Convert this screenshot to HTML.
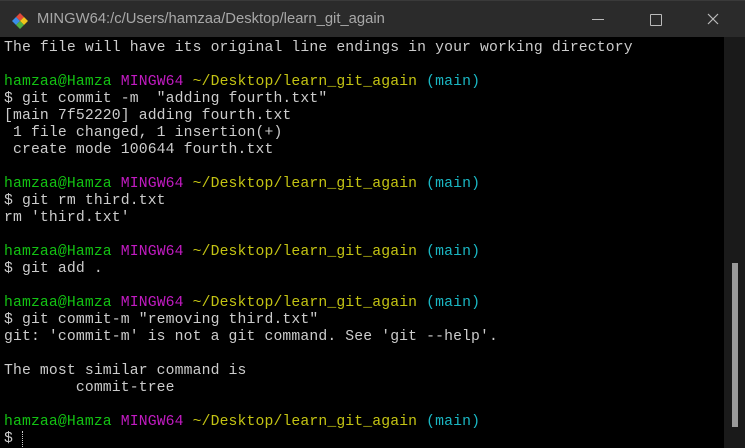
<!DOCTYPE html>
<html><head><meta charset="utf-8"><style>
html,body{margin:0;padding:0;background:#000;width:745px;height:448px;overflow:hidden}
.title{position:absolute;left:0;top:0;width:745px;height:37px;background:#2b2b2b;border-top:1px solid #3a3a3a;box-sizing:border-box}
.title .t{position:absolute;left:37px;top:10px;font:14.8px "Liberation Sans",sans-serif;color:#a8a8a8}
.term{position:absolute;left:4px;top:40px;font:14.75px/17px "Liberation Mono",monospace;letter-spacing:0.13px;color:#cccccc;white-space:pre}
.g{color:#13c313}.m{color:#c21bc2}.y{color:#c3c313}.c{color:#1ab7c3}
.sb{position:absolute;left:724px;top:37px;width:21px;height:411px;background:#1a1a1a}
.th{position:absolute;left:732px;top:263px;width:6px;height:164px;background:#9a9a9a}
</style></head><body>
<div class="title">
<svg style="position:absolute;left:10px;top:10px" width="20" height="20" viewBox="0 0 20 20">
<polygon points="10,2 14,6 10,10 6,6" fill="#e04a3a"/>
<polygon points="2,10 6,6 10,10 6,14" fill="#3b8eea"/>
<polygon points="10,10 14,6 18,10 14,14" fill="#f0c419"/>
<polygon points="6,14 10,10 14,14 10,18" fill="#52b043"/>
</svg>
<div class="t">MINGW64:/c/Users/hamzaa/Desktop/learn_git_again</div>
<div style="position:absolute;left:592px;top:18px;width:12px;height:1px;background:#bbb"></div>
<div style="position:absolute;left:650px;top:13px;width:10px;height:10px;border:1px solid #bbb;border-radius:1px"></div>
<svg style="position:absolute;left:707px;top:12px" width="12" height="12"><path d="M1 1L11 11M11 1L1 11" stroke="#bbb" stroke-width="1.2"/></svg>
</div>
<div class="term">The file will have its original line endings in your working directory

<span class="g">hamzaa@Hamza</span> <span class="m">MINGW64</span> <span class="y">~/Desktop/learn_git_again</span> <span class="c">(main)</span>
$ git commit -m  "adding fourth.txt"
[main 7f52220] adding fourth.txt
 1 file changed, 1 insertion(+)
 create mode 100644 fourth.txt

<span class="g">hamzaa@Hamza</span> <span class="m">MINGW64</span> <span class="y">~/Desktop/learn_git_again</span> <span class="c">(main)</span>
$ git rm third.txt
rm 'third.txt'

<span class="g">hamzaa@Hamza</span> <span class="m">MINGW64</span> <span class="y">~/Desktop/learn_git_again</span> <span class="c">(main)</span>
$ git add .

<span class="g">hamzaa@Hamza</span> <span class="m">MINGW64</span> <span class="y">~/Desktop/learn_git_again</span> <span class="c">(main)</span>
$ git commit-m "removing third.txt"
git: 'commit-m' is not a git command. See 'git --help'.

The most similar command is
        commit-tree

<span class="g">hamzaa@Hamza</span> <span class="m">MINGW64</span> <span class="y">~/Desktop/learn_git_again</span> <span class="c">(main)</span>
$ <span style="border-left:1px dotted #ccc"> </span></div>
<div class="sb"></div><div class="th"></div>
</body></html>
